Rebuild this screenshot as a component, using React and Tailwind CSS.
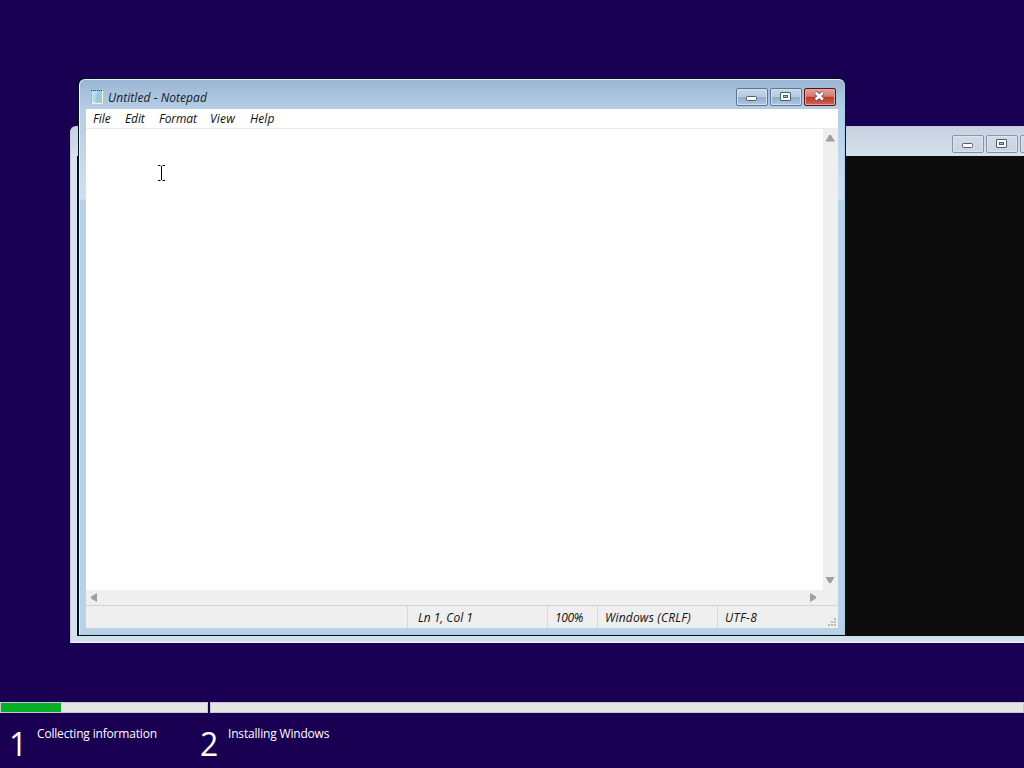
import clsx from "clsx";

const menuItems = [
    { label: "File", className: "w-8 tracking-[-0.05px]" },
    { label: "Edit", className: "w-[34px] tracking-[-0.1px]" },
    { label: "Format", className: "w-[51px] tracking-[-0.1px]" },
    { label: "View", className: "w-10 tracking-[0.2px]" },
    { label: "Help", className: "w-10 tracking-[0.1px]" },
];

const statusItems = [
    { label: "", className: "w-[321px]" },
    { label: "Ln 1, Col 1", className: "w-[140px] border-l pl-[10px] tracking-[-0.02px]" },
    { label: "100%", className: "w-[50px] border-l pl-[7px] tracking-[-0.4px]" },
    { label: "Windows (CRLF)", className: "w-[120px] border-l pl-[7px] tracking-[0.2px]" },
    { label: "UTF-8", className: "flex-1 border-l pl-[7px] tracking-[0.4px]" },
];

// Minimize, maximize and close glyphs
function CaptionIcon({ type }) {
    return (
        <svg width="30" height="16" viewBox="0 0 30 16" className="block">
            {type === "min" && (
                <rect x="9.5" y="7.5" width="10" height="4" rx="1" fill="#fbfcfd" stroke="#535b70" />
            )}
            {type === "max" && (
                <>
                    <rect x="9.5" y="3.5" width="10" height="8" rx="0.5" fill="#fbfcfd" stroke="#535b70" />
                    <rect x="12.5" y="6.5" width="4" height="2" fill="#a9bdd3" stroke="#535b70" />
                </>
            )}
            {type === "close" && (
                <>
                    <path d="M10.500 3.500L18 10.800M18 3.500L10.500 10.800" stroke="#6d4049" strokeWidth="4.400" />
                    <path d="M10.700 3.700L17.800 10.600M17.800 3.700L10.700 10.600" stroke="#ffffff" strokeWidth="2.800" />
                </>
            )}
        </svg>
    );
}

function CaptionButton({ type, inactive }) {
    return (
        <button
            className={clsx(
                "h-[18px] w-8 shrink-0 overflow-hidden rounded-[2px] border",
                inactive && "border-[#8793ad] bg-linear-to-b from-[#d0dae6] to-[#ccd6e4] shadow-[inset_0_0_0_1px_#dbe4ef]",
                !inactive && type !== "close" && "border-[#5d7595] bg-[linear-gradient(#c6d9ec_0%,#b4cbe2_48%,#91acc9_50%,#acc9e3_100%)] shadow-[inset_0_0_0_1px_#cfe0f0]",
                !inactive && type === "close" && "border-[#55131f] bg-[linear-gradient(#e4a09a_0%,#d47c70_46%,#b83a27_50%,#cf6650_100%)] shadow-[inset_0_0_0_1px_#e4a39b]"
            )}
        >
            <CaptionIcon type={type} />
        </button>
    );
}

function NotepadIcon() {
    return (
        <svg width="14" height="16" viewBox="0 0 14 16" className="block">
            <path d="M1.5 2h10.500v12.500H1.500z" fill="#a0cfdf" stroke="#8fb9cb" strokeWidth="0.6" />
            <path d="M2 2.5h5l-2 11.500H2z" fill="#c1e8f0" />
            <path d="M3 5h8M3 7h8M3 9h8M3 11h8" stroke="#83bfd0" strokeWidth="0.6" />
            <path d="M12.500 2v12.500H2" fill="none" stroke="#f5f3df" strokeWidth="1" />
            <path d="M1 1.500h12" stroke="#304856" strokeWidth="1.200" strokeDasharray="1 1" />
        </svg>
    );
}

function Arrow({ d }) {
    return (
        <svg width="15" height="15" viewBox="0 0 15 15" className="block shrink-0">
            <path d={d} fill="#a0a0a0" />
        </svg>
    );
}

function ConsoleWindow() {
    return (
        <div className="absolute top-[126px] left-[70px] flex h-[517px] w-[1000px] flex-col rounded-tl-[6px] border-t border-l border-[#c9c5dc] bg-[#d7e4ef]">
            <div className="flex h-[29px] shrink-0 gap-[2px] rounded-tl-[5px] bg-linear-to-b from-[#c8d0df] to-[#d6e2ee] pt-2 pl-[881px]">
                <CaptionButton type="min" inactive />
                <CaptionButton type="max" inactive />
                <CaptionButton type="close" inactive />
            </div>
            <div className="ml-[6px] flex-1 border-l border-[#03111d] bg-[#0c0c0c]"></div>
            <div className="h-[7px] shrink-0 border-b border-[#f1f5f7] bg-linear-to-b from-[#cae2eb] to-[#d8e2ec]"></div>
        </div>
    );
}

function NotepadWindow() {
    return (
        <div className="absolute top-[79px] left-[79px] flex h-[556px] w-[766px] flex-col rounded-t-[6px] border border-b-0 border-[#e6eff8] border-r-[#9fd0ee] bg-[linear-gradient(#9ab5d2_0px,#abc4dd_16px,#b5cde5_29px,#d2e0f0_119px,#b9d1e9_120px)] px-[6px] shadow-[0_0_0_1px_#07111f]">
            <div className="flex h-[29px] shrink-0 items-start">
                <div className="pt-[9px] pl-1">
                    <NotepadIcon />
                </div>
                <h1 className="flex-1 pt-[10px] pl-1 text-xs leading-4 tracking-[0.07px] whitespace-nowrap text-[#111a2c] italic">Untitled - Notepad</h1>
                <div className="flex gap-[2px] pt-2 pr-[2px]">
                    <CaptionButton type="min" />
                    <CaptionButton type="max" />
                    <CaptionButton type="close" />
                </div>
            </div>

            <div className="flex h-5 shrink-0 border-b border-[#ebebeb] bg-white pl-[7px] text-xs leading-5 text-[#111] italic">
                {menuItems.map((item) => (
                    <span key={item.label} className={clsx("whitespace-nowrap", item.className)}>{item.label}</span>
                ))}
            </div>

            <div className="flex flex-1 bg-white">
                <div className="flex-1"></div>
                <div className="flex w-[15px] flex-col justify-between bg-[#efefef] pt-[2px] pb-[2px]">
                    <Arrow d="M2.500 10.500L6 4h2l4 6.500z" />
                    <Arrow d="M2.500 4h9L8 10H6z" />
                </div>
            </div>
            <div className="flex h-[15px] shrink-0 justify-between bg-[#efefef] pr-[18px]">
                <Arrow d="M11 3v9L5 8.500v-2z" />
                <Arrow d="M5 3v9l6-3.500v-2z" />
            </div>

            <div className="flex h-[23px] shrink-0 border-t border-[#d5d5d5] bg-[#efefef] text-xs leading-[23px] text-[#111] italic">
                {statusItems.map((item) => (
                    <span key={item.label} className={clsx("h-[22px] border-[#d7d7d7] whitespace-nowrap", item.className)}>{item.label}</span>
                ))}
                <svg width="12" height="12" viewBox="0 0 12 12" className="mt-[11px] shrink-0 fill-[#bcbcbc]">
                    <path d="M8 1h2v2H8zM5 4h2v2H5zM8 4h2v2H8zM2 7h2v2H2zM5 7h2v2H5zM8 7h2v2H8z" />
                </svg>
            </div>
            <div className="-mx-[6px] h-[7px] shrink-0 border-b border-[#a9cbdc] bg-[#b9d0e7]"></div>

            {/* text cursor */}
            <svg width="9" height="16" viewBox="0 0 9 16" className="absolute top-[85px] left-[77px]">
                <path d="M1 0.500h2.500M5.500 0.500H8M4.500 1v14M1 15.500h2.500M5.500 15.500H8" fill="none" stroke="#000" />
            </svg>
        </div>
    );
}

function SetupStep({ number, label, className }) {
    return (
        <div className={clsx("flex text-white", className)}>
            <span className="w-[28px] pt-[9px] text-[32px] leading-[44px]">{number}</span>
            <span className="pt-3 text-xs leading-[18px] tracking-[-0.18px] whitespace-nowrap">{label}</span>
        </div>
    );
}

export default function App() {
    return (
        <main className="relative flex h-screen w-screen flex-col justify-end overflow-hidden bg-[#1a0053] font-['Open_Sans','Noto_Sans',sans-serif]">
            <ConsoleWindow />
            <NotepadWindow />

            <footer className="h-[66px]">
                <div className="flex h-[11px] gap-[2px]">
                    <div className="w-[208px] border border-[#cbc5d5] bg-[#e6e6e6]">
                        <div className="h-full w-[60px] bg-[#08b025]"></div>
                    </div>
                    <div className="flex-1 border border-[#cbc5d5] bg-[#e6e6e6]"></div>
                </div>
                <div className="flex pl-[9px]">
                    <SetupStep number="1" label="Collecting information" className="w-[191px]" />
                    <SetupStep number="2" label="Installing Windows" />
                </div>
            </footer>
        </main>
    );
}
